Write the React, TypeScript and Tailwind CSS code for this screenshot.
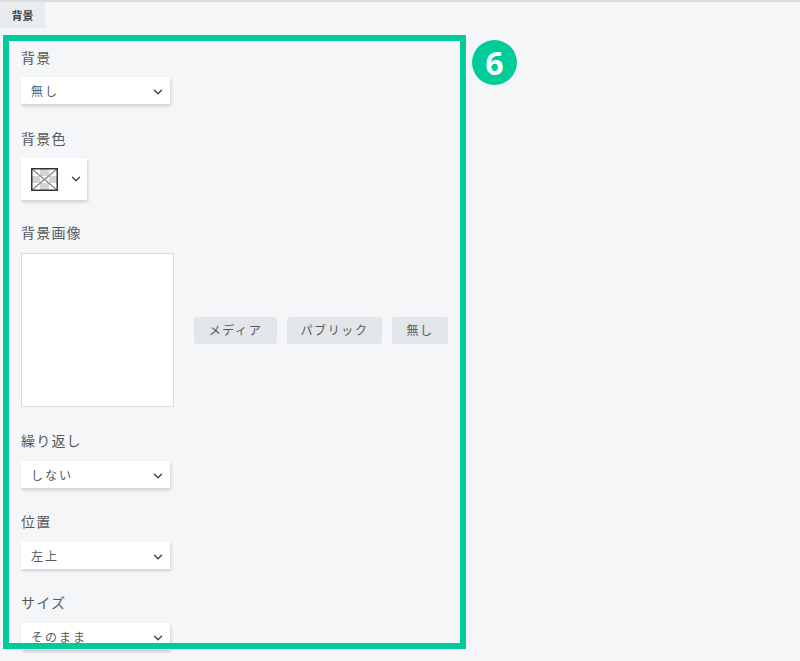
import { ChevronDown } from 'lucide-react';

const font = { fontFamily: '"Noto Sans CJK JP", "Open Sans", sans-serif' };

function Select({ value }: { value: string }) {
  return (
    <div className="flex h-[27px] w-[149px] items-center justify-between bg-white pl-[10px] pr-[5px] text-[12px] tracking-[2px] text-[#555a60] shadow-[1px_2px_3px_rgba(0,0,0,0.16)]">
      <span>{value}</span>
      <ChevronDown size={14} strokeWidth={2.4} className="mt-[3px] text-[#3c434a]" />
    </div>
  );
}

function Label({ children, gap = 'mb-[11px]' }: { children: string; gap?: string }) {
  return <div className={`h-[20px] text-[14px] leading-[20px] tracking-[1.2px] text-[#555a60] ${gap}`}>{children}</div>;
}

function Swatch() {
  return (
    <svg width="27" height="23" viewBox="0 0 27 23">
      <rect width="27" height="23" fill="#fff" />
      <g fill="#d4d4d4">
        <rect x="9" y="1" width="9" height="7" />
        <rect x="1" y="8" width="8" height="7" />
        <rect x="18" y="8" width="8" height="7" />
        <rect x="9" y="15" width="9" height="7" />
      </g>
      <path d="M1 1L26 22M26 1L1 22" stroke="#8a8a8a" strokeWidth="1.4" />
      <rect x="0.75" y="0.75" width="25.5" height="21.5" fill="none" stroke="#333" strokeWidth="1.5" />
    </svg>
  );
}

function MediaButton({ label, width }: { label: string; width: string }) {
  return (
    <div className={`flex h-[27px] items-center justify-center rounded-[3px] bg-[#e2e5e9] text-[12px] tracking-[1.6px] text-[#555a60] ${width}`}>
      {label}
    </div>
  );
}

export default function App() {
  return (
    <div className="relative h-[661px] w-[800px] overflow-hidden bg-[#f5f6f8]" style={font}>
      <div className="h-[2px] bg-[#dcdcde]" />
      <div className="flex h-[26px] w-[45px] items-center justify-center bg-[#e9ecef] text-[11px] font-bold text-[#3c434a]">
        背景
      </div>

      <div className="flex flex-col pl-[21px] pt-[19px]">
        <Label gap="mb-[10px]">背景</Label>
        <Select value="無し" />

        <div className="mt-[24px]">
          <Label gap="mb-[10px]">背景色</Label>
        </div>
        <div className="flex h-[42px] w-[66px] items-center gap-[11px] bg-white pl-[10px] shadow-[1px_2px_3px_rgba(0,0,0,0.16)]">
          <Swatch />
          <ChevronDown size={14} strokeWidth={2.4} className="text-[#3c434a]" />
        </div>

        <div className="mt-[22px]">
          <Label>背景画像</Label>
        </div>
        <div className="flex items-center gap-[20px]">
          <div className="h-[154px] w-[153px] border border-[#dcdcde] bg-white" />
          <div className="flex gap-[10px]">
            <MediaButton label="メディア" width="w-[83px]" />
            <MediaButton label="パブリック" width="w-[95px]" />
            <MediaButton label="無し" width="w-[56px]" />
          </div>
        </div>

        <div className="mt-[23px]">
          <Label>繰り返し</Label>
        </div>
        <Select value="しない" />

        <div className="mt-[23px]">
          <Label>位置</Label>
        </div>
        <Select value="左上" />

        <div className="mt-[23px]">
          <Label>サイズ</Label>
        </div>
        <Select value="そのまま" />
      </div>

      {/* annotation over the screenshot */}
      <div className="absolute left-[3px] top-[35px] h-[614px] w-[463px] border-[6px] border-[#00cc99]" />
      <div className="absolute left-[472px] top-[40px] flex h-[45px] w-[45px] items-center justify-center rounded-full bg-[#00cc99] text-[32px] font-bold text-white" style={{ fontFamily: '"Open Sans", sans-serif' }}>
        6
      </div>
    </div>
  );
}
